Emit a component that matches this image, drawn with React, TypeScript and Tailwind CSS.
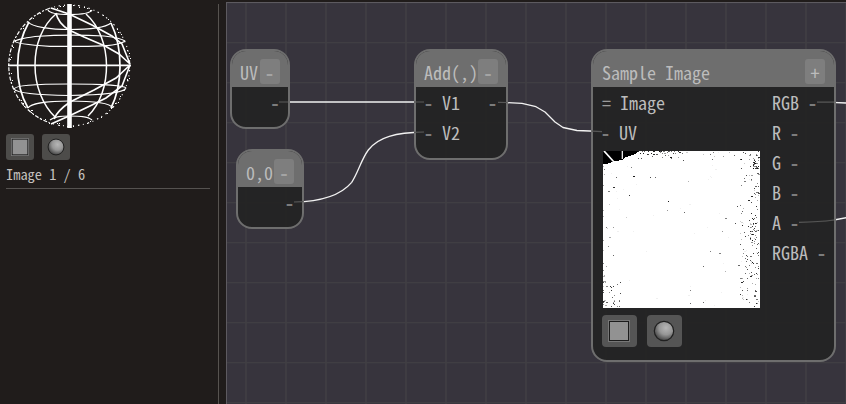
import type { ReactNode } from "react";

function random(seed: number) {
  let s = seed;
  return () => {
    s = (s * 1664525 + 1013904223) % 4294967296;
    return s / 4294967296;
  };
}

function Wireframe() {
  const rnd = random(11);
  const dots = Array.from({ length: 60 }, () => {
    const a = rnd() * Math.PI * 2;
    const r = 61 - rnd() * 2.5;
    return [69.5 + Math.cos(a) * r, 65.5 + Math.sin(a) * r];
  });
  return (
    <svg className="block h-[130px] w-[140px]" viewBox="0 0 140 130" fill="none" stroke="#fff">
      <path d="M49 8.5A60.5 60.5 0 0 0 49 122.5" strokeWidth="1.2" strokeDasharray="4 1.5 2 2" />
      <path d="M49 8.5A60.5 60.5 0 1 1 49 122.5" strokeWidth="1.1" strokeDasharray="1.5 4 1 3.5" />
      <path d="M69.5 4V128" strokeWidth="4.6" />
      <path d="M8 65.3H131" strokeWidth="1.8" />
      <path d="M29 22C14 48 14 84 28 108M111 23C124 50 122 86 111 108" strokeWidth="1.7" />
      <path d="M56 14C28 37 28 92 56 118M86 14C113 38 113 92 88 116" strokeWidth="1.5" />
      <path d="M15 42C14 40 24 38 35 36.5Q69 34 104 36Q121 38 125 41M125 41C121 44 110 46.3 88 46.3H50C28 45 15 43 15 41M28 22C32 27 51 29.5 69 29.5C87 29.5 105 28 111 23M48 10C50 14 60 14.5 69 14.5C80 14.5 90 14 92 10" strokeWidth="1.2" />
      <path d="M14 89C15 86 34 84 69 84C104 84 125 86 126 88M14 89C17 93 36 95 69 95.5C105 95 124 93 126 88M28 108C31 103 50 101 69 101C92 101 110 103 113 108M50 120C55 116 62 116 69 116C78 116 88 116 92 120" strokeWidth="1.2" />
      <path d="M51 8L69 14L92 25L112 36L122 44L130 64L119 54L105 46L84 37L69 30Q58 23 56 13M130 65L116 78L94 90L70 102Q57 111 54 119M130 65L122 86L106 98L92 105L69 116L51 124" strokeWidth="1.6" />
      {dots.map(([x, y], i) => (
        <path key={i} d={`M${Math.round(x)} ${Math.round(y) + 0.5}h1`} />
      ))}
    </svg>
  );
}

function Noise() {
  const rnd = random(77);
  const cells: [number, number, number][] = [
    [30, 25, 0.9], [13, 26, 0.6], [47, 26, 0.7], [52, 26, 0.6], [26, 44, 0.8], [65, 50, 0.9],
    [10, 36, 0.8], [85, 30, 0.3], [64, 59, 0.4], [81, 61, 0.6], [23, 66, 0.2], [10, 76, 0.4],
    [122, 67, 0.5], [132, 72, 0.7], [119, 80, 0.4], [134, 55, 0.7], [10, 104, 0.6], [107, 100, 0.5],
    [116, 102, 0.5], [100, 115, 0.6], [122, 120, 0.3], [87, 139, 0.5], [87, 152, 0.6], [100, 151, 0.6],
    [135, 114, 0.6], [149, 111, 0.9], [150, 112, 0.8], [149, 67, 0.8], [150, 68, 0.9], [28, 16, 0.5],
    [67, 6, 0.9], [68, 7, 0.6], [80, 9, 0.7], [109, 8, 0.6], [131, 4, 0.6], [120, 5, 0.4],
  ];
  for (let i = 0; i < 150; i++) {
    cells.push([155 - Math.floor(Math.pow(rnd(), 1.4) * 19), Math.floor(rnd() * 157), 0.15 + rnd() * 0.7]);
  }
  for (let i = 0; i < 22; i++) {
    cells.push([149 + Math.floor(rnd() * 7), 4 + Math.floor(rnd() * 14), 0.4 + rnd() * 0.5]);
    cells.push([145 + Math.floor(rnd() * 8), 62 + Math.floor(rnd() * 28), 0.3 + rnd() * 0.6]);
  }
  for (let i = 0; i < 40; i++) {
    cells.push([Math.floor(32 + rnd() * 45), Math.floor(Math.pow(rnd(), 3) * 8), 0.3 + rnd() * 0.6]);
  }
  for (let i = 0; i < 8; i++) {
    cells.push([Math.floor(77 + rnd() * 75), Math.floor(rnd() * 7), 0.2 + rnd() * 0.4]);
  }
  for (let i = 0; i < 36; i++) {
    cells.push([Math.floor(Math.pow(rnd(), 1.5) * 18), 155 - Math.floor(Math.pow(rnd(), 1.5) * 26), 0.2 + rnd() * 0.6]);
  }
  for (let i = 0; i < 20; i++) {
    cells.push([Math.floor(Math.pow(rnd(), 3) * 8), 15 + Math.floor(rnd() * 125), 0.15 + rnd() * 0.4]);
  }
  for (let i = 0; i < 40; i++) {
    cells.push([Math.floor(rnd() * 157), Math.floor(rnd() * 157), 0.06]);
  }
  return (
    <svg className="block size-[157px] bg-white" viewBox="0 0 157 157" shapeRendering="crispEdges">
      {cells.map(([x, y, o], i) => (
        <rect key={i} x={x} y={y} width={i % 6 === 0 ? 2 : 1} height="1" fillOpacity={o} />
      ))}
      <path d="M0 0H36L32 3L27 5L22 6L19 9L12 10L7 12L0 13.5Z" />
      <g shapeRendering="auto" fill="none" stroke="#fff">
        <path d="M1 0L11 11" strokeWidth="1.7" />
        <path d="M19.3 0V8" strokeWidth="1.2" />
      </g>
    </svg>
  );
}

function SquareIcon({ size }: { size: number }) {
  return (
    <svg width={size} height={size} viewBox="0 0 22 22">
      <rect x=".5" y=".5" width="21" height="21" fill="#1c1c1c" stroke="#777" />
      <rect x="2" y="2" width="18" height="18" fill="#929292" />
    </svg>
  );
}

function SphereIcon({ size }: { size: number }) {
  return (
    <svg width={size} height={size} viewBox="0 0 22 22">
      <defs>
        <radialGradient id="ball" cx=".6" cy=".34" r=".7">
          <stop offset="0" stopColor="#b6b6b6" />
          <stop offset=".5" stopColor="#969696" />
          <stop offset="1" stopColor="#3c3c3c" />
        </radialGradient>
      </defs>
      <circle cx="11" cy="11" r="9.7" fill="url(#ball)" stroke="#202020" strokeWidth="1.2" />
    </svg>
  );
}

function Pin({ sign = "-" }: { sign?: string }) {
  return <span className={sign === "-" ? "font-bold text-[#7c7c7c]" : "text-[#9a9a9a]"}>{sign}</span>;
}

function Toggle({ children }: { children: string }) {
  return (
    <span
      className={`flex h-[25px] w-5 shrink-0 items-center justify-center rounded-[3px] bg-[#7e7e7e] ${
        children === "-" ? "font-bold text-[#a4a4a4]" : "text-[#bcbcbc]"
      }`}
    >
      {children}
    </span>
  );
}

function Node({
  place,
  pad = "pr-2 pl-2",
  title,
  sign,
  children,
}: {
  place: string;
  pad?: string;
  title: string;
  sign: string;
  children: ReactNode;
}) {
  return (
    <section
      className={`absolute flex flex-col overflow-hidden rounded-[16px] border-2 border-[#6e6e6e] bg-[#242424]/97 text-[18px] leading-[30px] whitespace-pre text-[#bcbcbc] ${place}`}
    >
      <header className={`flex h-9 shrink-0 items-start justify-between bg-[#6e6e6e] pt-2 ${pad}`}>
        <span className="-mt-0.5 h-[30px]">{title}</span>
        <Toggle>{sign}</Toggle>
      </header>
      {children}
    </section>
  );
}

function Output({ name }: { name: string }) {
  return (
    <div className="h-[30px]">
      {name} <Pin />
    </div>
  );
}

export default function App() {
  return (
    <main className="flex h-[404px] w-[846px] overflow-hidden bg-[#201c1b] font-['Noto_Sans_Mono_CJK_JP','Noto_Sans_Mono_CJK_SC','Noto_Sans_CJK_JP',monospace]">
      <aside className="flex w-[218px] shrink-0 flex-col">
        <Wireframe />
        <div className="mt-1 flex gap-2 pl-1.5">
          <div className="flex h-[26px] w-7 items-center justify-center rounded-[3px] bg-[#4d4c4a]">
            <SquareIcon size={18} />
          </div>
          <div className="flex h-[26px] w-7 items-center justify-center rounded-[3px] bg-[#4d4c4a]">
            <SphereIcon size={18} />
          </div>
        </div>
        <p className="mt-0.5 ml-1.5 h-[27px] w-[204px] border-b border-[#555250] text-[14.4px] leading-6 whitespace-pre text-[#c4c1bf]">
          Image 1 / 6
        </p>
      </aside>
      <div className="mt-1 w-2 shrink-0 border-l border-[#575350]" />
      <div className="relative mt-0.5 h-[402px] w-[620px] shrink-0 overflow-hidden border-t border-l border-[#5d5a60] bg-[#37343d]">
        <svg className="absolute -top-[3px] -left-[227px] h-[404px] w-[846px]" viewBox="0 0 846 404" fill="none">
          <defs>
            <pattern id="grid" x="245" y="42" width="40" height="40" patternUnits="userSpaceOnUse">
              <path d="M1 0V40M0 .5H40" stroke="#403e43" strokeWidth="1.6" />
            </pattern>
          </defs>
          <rect width="846" height="404" fill="url(#grid)" />
          <g stroke="#f2f2f2" strokeWidth="1.3" strokeLinejoin="round">
            <path d="M279 102H424" strokeWidth="1.6" />
            <path d="M294 202C323 201.500 341 195 351.700 182.300C358 173 361 160 368.300 150C378 137 396 132.500 424 132" />
            <path d="M498 102.3L522 103.3L536 106.7L545 112L555 122L563 127.500L577 130.500L602 131.5" />
            <path d="M817 102.2Q832 102.2 846 103M799 222.3Q826 222.3 847 217.5" />
          </g>
        </svg>

        <Node place="top-[46px] left-[3px] h-20 w-[59.500px]" title="UV" sign="-">
          <div className="pr-2 text-right"><Pin /></div>
        </Node>
        <Node place="top-[146px] left-[9px] h-20 w-[68px]" title="0,0" sign="-">
          <div className="pr-2 text-right"><Pin /></div>
        </Node>
        <Node place="top-[46px] left-[187px] h-[111px] w-[94px]" pad="pr-[8.500px] pl-2" title="Add(,)" sign="-">
          <div className="flex justify-between pr-[9px] pl-2">
            <span><Pin /> V1</span>
            <Pin />
          </div>
          <div className="pl-2"><Pin /> V2</div>
        </Node>
        <Node place="top-[46px] left-[364px] h-[313px] w-[244.500px]" pad="pr-[8.500px] pl-[9px]" title="Sample Image" sign="+">
          <div className="flex">
            <div className="w-[179px] shrink-0 pl-2">
              <div className="h-[30px] pl-px"><Pin sign="=" /> Image</div>
              <div className="h-[30px]"><Pin /> UV</div>
              <div className="mt-1 ml-[2px]"><Noise /></div>
              <div className="mt-[7px] ml-[0.500px] flex gap-[9.500px]">
                <div className="flex h-8 w-[35.500px] items-center justify-center rounded bg-[#555]"><SquareIcon size={22} /></div>
                <div className="flex h-8 w-[35.500px] items-center justify-center rounded bg-[#555]"><SphereIcon size={22} /></div>
              </div>
            </div>
            <div>
              <Output name="RGB" />
              <Output name="R" />
              <Output name="G" />
              <Output name="B" />
              <Output name="A" />
              <Output name="RGBA" />
            </div>
          </div>
        </Node>

        <svg className="pointer-events-none absolute -top-[3px] -left-[227px] h-[404px] w-[846px]" viewBox="0 0 846 404" fill="none" stroke="#565656" strokeWidth="1.2">
          <path d="M279 102H288M294 202L303 201.6M414 102H424M414 132.3L424 132M498 102.3L507 102.5M592 131.2L602 131.7M817 102.2H834M799 222.3Q819 222 834 220" />
        </svg>
      </div>
    </main>
  );
}
